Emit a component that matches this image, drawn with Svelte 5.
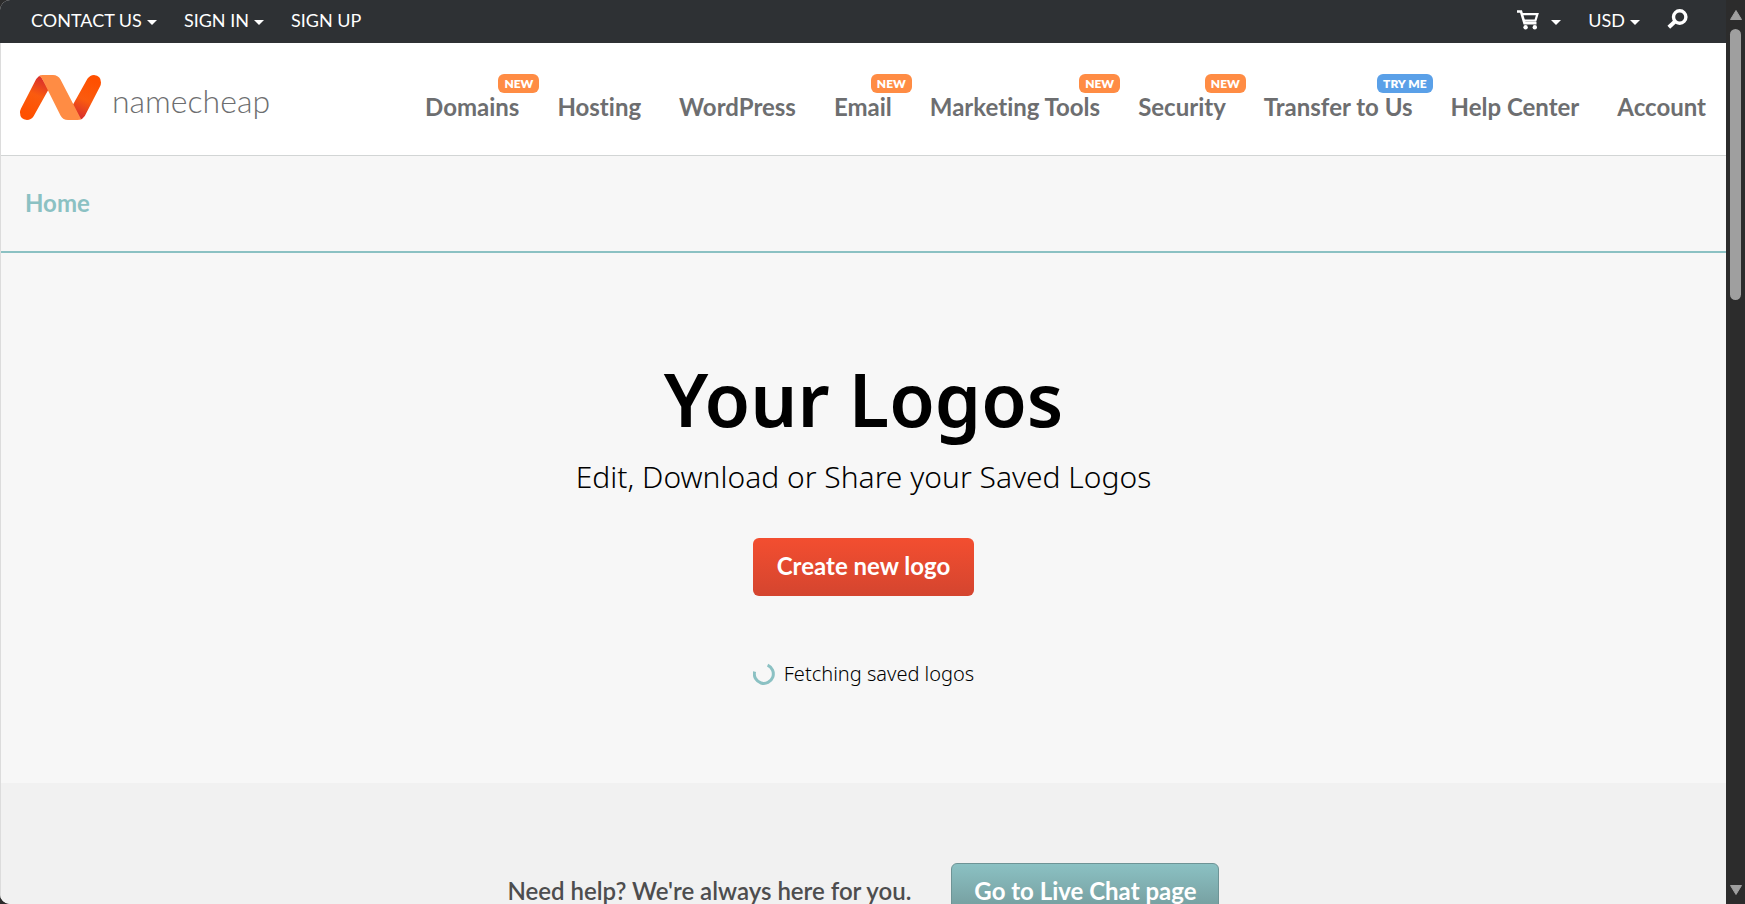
<script>
  const account = [
    { label: 'CONTACT US', menu: true },
    { label: 'SIGN IN', menu: true },
    { label: 'SIGN UP', menu: false }
  ];

  const links = [
    { label: 'Domains', badge: 'NEW' },
    { label: 'Hosting' },
    { label: 'WordPress' },
    { label: 'Email', badge: 'NEW' },
    { label: 'Marketing Tools', badge: 'NEW' },
    { label: 'Security', badge: 'NEW' },
    { label: 'Transfer to Us', badge: 'TRY ME', tone: 'blue' },
    { label: 'Help Center' },
    { label: 'Account' }
  ];
</script>

<div class="window">
  <div class="page">
    <div class="topbar">
      <div class="group">
        {#each account as item}
          <button class="top-link">
            {item.label}
            {#if item.menu}<span class="caret"></span>{/if}
          </button>
        {/each}
      </div>
      <div class="group tools">
        <button class="top-link cart" aria-label="Cart">
          <svg width="22" height="20" viewBox="0 0 22 20" fill="none" stroke="#fff" aria-hidden="true">
            <path d="M0 1.500H4L7.500 13.200H19.500" stroke-width="2.600" />
            <path d="M5 4.200H20.400L18.400 10.600H7" stroke-width="2.200" />
            <circle cx="8.600" cy="17.300" r="2.200" fill="#fff" stroke="none" />
            <circle cx="17.800" cy="17.300" r="2.200" fill="#fff" stroke="none" />
          </svg>
          <span class="caret"></span>
        </button>
        <button class="top-link">USD<span class="caret"></span></button>
        <button class="top-link search" aria-label="Search">
          <svg width="21" height="20" viewBox="0 0 21 20" fill="none" stroke="#fff" aria-hidden="true">
            <circle cx="12.700" cy="8" r="6.200" stroke-width="3.400" />
            <path d="M8 12.500L1.800 18.200" stroke-width="4" />
          </svg>
        </button>
      </div>
    </div>

    <div class="body">
      <header class="header">
        <a class="logo" href="/">
          <svg width="81" height="45" viewBox="0 0 81 45" aria-hidden="true">
            <defs>
              <linearGradient id="left-arm" x1="8" y1="40" x2="24" y2="4" gradientUnits="userSpaceOnUse">
                <stop offset="0" stop-color="#ff5000" />
                <stop offset="0.55" stop-color="#fa5b0f" />
                <stop offset="1" stop-color="#d9302c" />
              </linearGradient>
              <linearGradient id="right-arm" x1="73" y1="5" x2="57" y2="41" gradientUnits="userSpaceOnUse">
                <stop offset="0" stop-color="#ff5000" />
                <stop offset="0.55" stop-color="#fa5b0f" />
                <stop offset="1" stop-color="#d9302c" />
              </linearGradient>
            </defs>
            <path d="M20.5 0.8L28.5 14.5L13.6 41.2Q11 45 7 45Q0 44.500 0 37.500Q0 35.500 1 33.500L16.200 4Q18 1 22 0Z" fill="url(#left-arm)" />
            <path d="M60.5 44.200L52.500 30.500L67.400 3.800Q70 0 74 0Q81 0.500 81 7.500Q81 9.500 80 11.500L64.800 41Q63 44 59 45Z" fill="url(#right-arm)" />
            <path d="M19 1Q20.500 0 22.500 0H33Q38 0 40.500 4.500L61 44Q60 45 57.500 45H48Q43 45 40.500 40.500L22.500 4.500Q21 1.500 19 1Z" fill="#ff8c44" />
          </svg>
          <span class="wordmark">namecheap</span>
        </a>
        <nav class="nav" aria-label="Main">
          {#each links as link}
            <a href="/">
              {link.label}
              {#if link.badge}<span class="badge {link.tone ?? ''}">{link.badge}</span>{/if}
            </a>
          {/each}
        </nav>
      </header>

      <nav class="crumbs" aria-label="Breadcrumb"><a href="/">Home</a></nav>

      <main class="hero">
        <h1>Your Logos</h1>
        <p class="lead">Edit, Download or Share your Saved Logos</p>
        <button class="create">Create new logo</button>
        <div class="status" role="status">
          <svg width="22" height="22" viewBox="0 0 22 22" fill="none" aria-hidden="true">
            <path d="M14.600 2.200A9.500 9.500 0 1 1 1.600 8.600" stroke="#8bc1c3" stroke-width="3" />
          </svg>
          Fetching saved logos
        </div>
      </main>

      <section class="help">
        <p>Need help? We're always here for you.</p>
        <button class="chat">Go to Live Chat page</button>
      </section>
    </div>
  </div>

  <div class="scrollbar" aria-hidden="true">
    <svg width="14" height="12" viewBox="0 0 14 12"><path d="M7 1.500L12.500 10.500H1.500Z" fill="#9f9f9f" stroke="#9f9f9f" stroke-linejoin="round" /></svg>
    <div class="track"><div class="thumb"></div></div>
    <svg width="14" height="12" viewBox="0 0 14 12"><path d="M7 10.500L12.500 1.500H1.500Z" fill="#9f9f9f" stroke="#9f9f9f" stroke-linejoin="round" /></svg>
  </div>
</div>

<style>
  :global(body) {
    margin: 0;
    background: #2c2c2c;
  }

  .window {
    display: flex;
    height: 100vh;
    overflow: hidden;
    font-family: Lato, sans-serif;
    font-variant-ligatures: none;
    background: #2c2c2c;
  }

  .page {
    flex: 1;
    min-width: 0;
    display: flex;
    flex-direction: column;
    overflow: hidden;
    background: #f7f7f7;
    border-radius: 10px 0 0 10px;
  }

  button {
    border: 0;
    margin: 0;
    font-family: inherit;
    cursor: pointer;
  }

  a {
    text-decoration: none;
  }

  .topbar {
    flex: none;
    height: 43px;
    box-sizing: border-box;
    display: flex;
    justify-content: space-between;
    padding: 0 38px 4px 31px;
    background: #2e3134;
  }

  .group {
    display: flex;
    align-items: center;
    gap: 27px;
  }

  .top-link {
    display: flex;
    align-items: center;
    gap: 5px;
    padding: 0;
    background: none;
    color: #fff;
    font-size: 18px;
    line-height: 24px;
  }

  .caret {
    border: 5px solid transparent;
    border-top-color: #fff;
    border-bottom: 0;
    margin-top: 6px;
  }

  .cart {
    gap: 12px;
  }

  .search {
    padding-bottom: 2px;
  }

  .body {
    flex: 1;
    min-height: 0;
    overflow: hidden;
    border-left: 1px solid #dcdcdc;
  }

  .header {
    display: flex;
    align-items: center;
    height: 112px;
    padding: 0 20px 0 19px;
    background: #fff;
    border-bottom: 1px solid #d2d5d5;
  }

  .logo {
    display: flex;
    align-items: center;
    gap: 11px;
    padding-bottom: 4px;
    color: #6d6e70;
    font-size: 32px;
    font-weight: 300;
    line-height: 44px;
  }

  .wordmark {
    padding-top: 8px;
  }

  .nav {
    display: flex;
    justify-content: flex-end;
    gap: 38px;
    margin-left: auto;
    padding-top: 16px;
  }

  .nav a {
    position: relative;
    color: #6d6e70;
    font-size: 24px;
    font-weight: 700;
    line-height: 32px;
    white-space: nowrap;
  }

  .badge {
    position: absolute;
    top: -17px;
    right: -20px;
    padding: 0 6px;
    border-radius: 6px;
    background: #ff8c44;
    color: #fff;
    font-size: 12px;
    font-weight: 800;
    line-height: 19px;
  }

  .badge.blue {
    background: #5aa0e8;
  }

  .crumbs {
    padding: 30px 24px 32px;
    border-bottom: 2px solid #8bc1c3;
    font-size: 24px;
    font-weight: 700;
    line-height: 33px;
  }

  .crumbs a {
    color: #8bc1c3;
  }

  .hero {
    display: flex;
    flex-direction: column;
    align-items: center;
    padding: 100px 0 95px;
    color: #000;
  }

  h1 {
    margin: 0;
    font-family: "Noto Sans", sans-serif;
    font-size: 74px;
    font-weight: 600;
    line-height: 92px;
  }

  .lead {
    margin: 12px 0 41px;
    font-family: "Noto Sans", sans-serif;
    font-size: 30px;
    font-weight: 300;
    line-height: 40px;
  }

  .create,
  .chat {
    padding: 0 24px 2px;
    border-radius: 6px;
    color: #fff;
    font-size: 24px;
    font-weight: 700;
    line-height: 56px;
  }

  .create {
    background: linear-gradient(#f34e30, #d4452f);
  }

  .status {
    display: flex;
    align-items: center;
    gap: 9px;
    margin-top: 64px;
    font-family: "Noto Sans", sans-serif;
    font-size: 20px;
    font-weight: 300;
    line-height: 28px;
  }

  .help {
    display: flex;
    justify-content: center;
    align-items: center;
    gap: 40px;
    padding: 80px 0;
    background: #f1f1f1;
  }

  .help p {
    margin: 0;
    padding-bottom: 4px;
    color: #4d4d4e;
    font-size: 24px;
    font-weight: 600;
    line-height: 32px;
  }

  .chat {
    padding: 0 22px 4px;
    border: 1px solid #6e9496;
    background: linear-gradient(#8bc1c3, #6f9394);
    line-height: 54px;
  }

  .scrollbar {
    flex: none;
    width: 19px;
    box-sizing: border-box;
    display: flex;
    flex-direction: column;
    align-items: center;
    gap: 8px;
    padding: 9px 0 8px;
    background: #2c2c2c;
  }

  .scrollbar svg {
    flex: none;
  }

  .track {
    flex: 1;
    width: 11px;
  }

  .thumb {
    height: 32%;
    border-radius: 6px;
    background: #9f9f9f;
  }
</style>
